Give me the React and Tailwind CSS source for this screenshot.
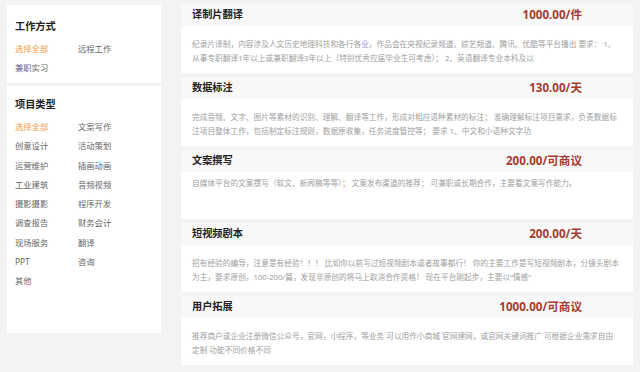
import React from 'react';

const workTypes = [
  { label: '选择全部', active: true },
  { label: '远程工作' },
  { label: '兼职实习' },
];

const projectTypes = [
  { label: '选择全部', active: true },
  { label: '文案写作' },
  { label: '创意设计' },
  { label: '活动策划' },
  { label: '运营维护' },
  { label: '插画动画' },
  { label: '工业建筑' },
  { label: '音频视频' },
  { label: '摄影摄影' },
  { label: '程序开发' },
  { label: '调查报告' },
  { label: '财务会计' },
  { label: '现场服务' },
  { label: '翻译' },
  { label: 'PPT' },
  { label: '咨询' },
  { label: '其他' },
];

const jobs = [
  {
    title: '译制片翻译',
    price: '1000.00/件',
    lines: [
      '纪录片译制，内容涉及人文历史地理科技和各行各业，作品会在央视纪录频道、综艺频道、腾讯、优酷等平台播出 要求： 1、',
      '从事专职翻译1年以上或兼职翻译3年以上（特别优秀应届毕业生可考虑）； 2、英语翻译专业本科及以',
    ],
  },
  {
    title: '数据标注',
    price: '130.00/天',
    lines: [
      '完成音频、文字、图片等素材的识别、理解、翻译等工作，形成对相应语种素材的标注； 准确理解标注项目需求，负责数据标',
      '注项目整体工作，包括制定标注规则，数据原收集，任务进度管控等； 要求 1、中文和小语种文字功',
    ],
  },
  {
    title: '文案撰写',
    price: '200.00/可商议',
    short: true,
    lines: ['自媒体平台的文案撰写（软文、新闻稿等等）； 文案发布渠道的推荐； 可兼职或长期合作，主要看文案写作能力。'],
  },
  {
    title: '短视频剧本',
    price: '200.00/天',
    lines: [
      '招有经验的编导，注意是有经验！！！ 比如你以前写过短视频剧本或者故事都行！ 你的主要工作是写短视频剧本，分镜头剧本',
      '为主，要求原创，100-200/篇，发现非原创的将马上取消合作资格！ 现在平台刚起步，主要以“情感”',
    ],
  },
  {
    title: '用户拓展',
    price: '1000.00/可商议',
    lines: [
      '推荐商户或企业注册微信公众号，官网，小程序，等业务 可以用作小商城 官网建网，或官网关键词推广 可根据企业需求自由',
      '定制 功能不同价格不同',
    ],
  },
];

function FilterGroup({ title, items, className }) {
  return (
    <div className={`bg-white px-[8px] ${className}`}>
      <h3 className="text-[10.2px] font-bold leading-[14px] text-[#222]">{title}</h3>
      <div className="mt-[6px] grid grid-cols-[63px_63px]">
        {items.map((item) => (
          <span
            key={item.label}
            className={`h-[19.3px] text-[8.3px] leading-[19.3px] ${item.active ? 'text-[#f39a45]' : 'text-[#666]'}`}
          >
            {item.label}
          </span>
        ))}
      </div>
    </div>
  );
}

function JobCard({ job }) {
  return (
    <div className="flex flex-col">
      <div className="flex h-[22px] items-center justify-between bg-[#f8f8f9] pl-[11px] pr-[51px]">
        <span className="text-[10.2px] font-bold text-[#222]">{job.title}</span>
        <span className="text-[11.6px] font-bold text-[#a53c2f]">{job.price}</span>
      </div>
      <div
        className={`h-[47px] overflow-hidden bg-white pl-[11px] text-[7.7px] leading-[14px] text-[#a0a0a0] ${job.short ? 'pt-[4px]' : 'pt-[11px]'}`}
      >
        {job.lines.map((line) => (
          <p key={line} className="whitespace-nowrap">
            {line}
          </p>
        ))}
      </div>
    </div>
  );
}

export default function App() {
  return (
    <div className="flex h-[372px] w-[640px] items-start gap-[20px] overflow-hidden bg-[#f3f3f5] pl-[7px] pt-[4px] font-['Noto_Sans','Noto_Sans_CJK_SC',sans-serif]">
      <aside className="mt-[1px] flex w-[154px] flex-col gap-[3px]">
        <FilterGroup title="工作方式" items={workTypes} className="h-[78px] pt-[14px]" />
        <FilterGroup title="项目类型" items={projectTypes} className="h-[247px] pt-[11px]" />
      </aside>
      <main className="flex w-[452px] flex-col gap-[4px]">
        {jobs.map((job) => (
          <JobCard key={job.title} job={job} />
        ))}
      </main>
    </div>
  );
}
